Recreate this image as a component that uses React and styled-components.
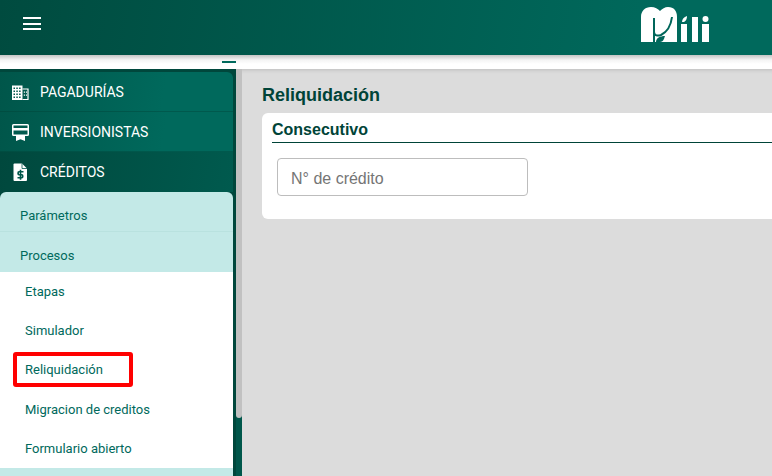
import React from 'react';
import styled, { createGlobalStyle } from 'styled-components';

const GlobalStyle = createGlobalStyle`
  html, body { margin: 0; padding: 0; height: 100%; overflow: hidden; }
  body { font-family: "Liberation Sans", Arial, sans-serif; background: #dcdcdc; }
  #root { height: 100%; }
  * { box-sizing: border-box; }
`;

const Page = styled.div`
  width: 772px;
  height: 476px;
  display: flex;
  flex-direction: column;
  overflow: hidden;
`;

const Header = styled.header`
  height: 55px;
  flex: none;
  display: flex;
  align-items: flex-start;
  justify-content: space-between;
  padding: 17px 62px 0 23px;
  background: linear-gradient(100deg, #004b3f 0%, #00695c 85%);
`;

const MenuButton = styled.button`
  width: 18px;
  height: 13px;
  padding: 0;
  border: 0;
  background: none;
  display: flex;
  flex-direction: column;
  justify-content: space-between;
`;

const MenuLine = styled.span`
  display: block;
  height: 2px;
  background: #fff;
`;

const Logo = styled.svg`
  width: 69px;
  height: 36px;
  margin-top: -10px;
  display: block;
`;

const TabStrip = styled.div`
  height: 14px;
  flex: none;
  background: linear-gradient(#c4c4c4 0, #f4f4f4 5px, #fff 9px);
  padding: 6px 0 0 222px;
`;

const TabMark = styled.div`
  width: 14px;
  height: 2px;
  background: #00695c;
`;

const Body = styled.div`
  flex: 1;
  display: flex;
  min-height: 0;
`;

const Sidebar = styled.aside`
  width: 236px;
  flex: none;
  padding: 3px 3px 0 0;
  background: #00473c;
  overflow: hidden;
`;

const NavRow = styled.div`
  height: 40px;
  display: flex;
  align-items: center;
  gap: 10px;
  padding-left: 11px;
  color: #fff;
  font-family: Roboto, sans-serif;
  font-size: 14px;
  background: ${(p) =>
    p.$active
      ? 'linear-gradient(100deg, #00483d, #005a4e)'
      : 'linear-gradient(100deg, #00564a, #00695c 70%)'};
  border-top-right-radius: ${(p) => (p.$first ? '6px' : '0')};
  box-shadow: ${(p) => (p.$active ? 'none' : 'inset 0 -1px 0 rgba(0, 60, 50, 0.35)')};
`;

const NavIcon = styled.svg`
  width: 19px;
  height: 19px;
  flex: none;
  display: block;
`;

const SubGroup = styled.div`
  background: #c3e9e7;
  border-radius: ${(p) => (p.$top ? '6px 6px 0 0' : '0')};
`;

const SubRow = styled.div`
  height: 40px;
  display: flex;
  align-items: center;
  padding: 6px 0 0 20px;
  color: #00695c;
  font-family: Roboto, sans-serif;
  font-size: 13px;
  box-shadow: ${(p) => (p.$divided ? 'inset 0 -1px 0 #b9e2df' : 'none')};
`;

const LinkList = styled.div`
  background: #fff;
  height: 196px;
`;

const LinkRow = styled.div`
  height: 39.2px;
  display: flex;
  align-items: center;
  padding-left: 25px;
  color: #00695c;
  font-family: Roboto, sans-serif;
  font-size: 13px;
  position: relative;
`;

const Highlight = styled.div`
  position: absolute;
  left: 13px;
  top: 2px;
  width: 120px;
  height: 35px;
  border: 4px solid #ff0000;
  border-radius: 3px;
`;

const Scrollbar = styled.div`
  width: 6px;
  flex: none;
  background: #00574b;
`;

const ScrollThumb = styled.div`
  height: 349px;
  background: #c1c1c1;
  border-radius: 0 0 3px 3px;
`;

const Main = styled.main`
  flex: 1;
  min-width: 0;
  padding: 15px 0 0 20px;
  background: #dcdcdc;
  box-shadow: inset 0 5px 5px -5px rgba(0, 0, 0, 0.2);
`;

const Title = styled.h1`
  margin: 0 0 7px;
  font-size: 18px;
  line-height: 22px;
  font-weight: 700;
  color: #004438;
`;

const Card = styled.section`
  height: 106px;
  background: #fff;
  border-radius: 6px 0 0 6px;
  padding: 6px 0 0 10px;
`;

const CardTitle = styled.h2`
  margin: 0;
  height: 24px;
  font-size: 16px;
  line-height: 21px;
  font-weight: 700;
  color: #004438;
  border-bottom: 1px solid #004438;
`;

const CreditInput = styled.input`
  display: block;
  width: 251px;
  height: 38px;
  margin: 15px 0 0 5px;
  padding: 4px 13px 0;
  border: 1px solid #bdbdbd;
  border-radius: 4px;
  font-family: "Liberation Sans", Arial, sans-serif;
  font-size: 16px;
  background: #fff;
  outline: none;
  &::placeholder { color: #757575; opacity: 1; }
`;

const links = ['Etapas', 'Simulador', 'Reliquidación', 'Migracion de creditos', 'Formulario abierto'];

const BuildingIcon = () => (
  <NavIcon viewBox="0 0 19 19">
    <path d="M1 2.500h10.500v14.500H1z" fill="#fff" />
    <path d="M2.500 4.500h1.500v1.500H2.500zM5.300 4.500h1.500v1.500H5.300zM8.100 4.500h1.500v1.500H8.100zM2.500 7.500h1.500v1.500H2.500zM5.300 7.500h1.500v1.500H5.300zM8.100 7.500h1.500v1.500H8.100zM2.500 10.500h1.500v1.500H2.500zM5.300 10.500h1.500v1.500H5.300zM8.100 10.500h1.500v1.500H8.100zM2.500 13.500h1.500v1.500H2.500zM5.300 13.500h1.500v1.500H5.300zM8.100 13.500h1.500v1.500H8.100z" fill="#00584c" />
    <path d="M11.500 6h5.500v10.500h-5.500" fill="none" stroke="#fff" strokeWidth="1.200" />
    <path d="M12.800 8.500h1.300v1.300h-1.300zM12.800 11.500h1.300v1.300h-1.300zM15 8.500h1v1.300h-1zM15 11.500h1v1.300h-1z" fill="#fff" />
  </NavIcon>
);

const CertificateIcon = () => (
  <NavIcon viewBox="0 0 19 19" fill="#fff">
    <path fillRule="evenodd" d="M2.500 1h14A1.500 1.500 0 0 1 18 2.500v9a1.500 1.500 0 0 1-1.500 1.500H14v5l-4.500-1.800L5 18v-5H2.500A1.500 1.500 0 0 1 1 11.500v-9A1.500 1.500 0 0 1 2.500 1zM2.500 2.500V5h14V2.500zM2.500 7.500v4h14v-4z" />
  </NavIcon>
);

const InvoiceIcon = () => (
  <NavIcon viewBox="0 0 19 19">
    <path d="M3.500 .5H11l5 5v11.500a1 1 0 0 1-1 1H3.500a1 1 0 0 1-1-1V1.500a1 1 0 0 1 1-1z" fill="#fff" />
    <path d="M11 .5v5h5" fill="none" stroke="#00574b" strokeWidth="0.800" />
    <path d="M12.500 8.800H8c-1.300 0-1.300 3 0 3h2.800c1.300 0 1.300 3 0 3H6.500M9.500 6.800v10" fill="none" stroke="#00574b" strokeWidth="1.600" />
  </NavIcon>
);

export default function App() {
  return (
    <Page>
      <GlobalStyle />
      <Header>
        <MenuButton aria-label="Menu">
          <MenuLine />
          <MenuLine />
          <MenuLine />
        </MenuButton>
        <Logo viewBox="0 0 69 36" fill="#fff">
          <path d="M0 35V10C0 4 4 0 10 0c4 0 7 2 9 4 2-2 5-4 8-4 6 0 9 4 9 10v25z" />
          <path d="M13 11v24M31 10c-1 8-5 15-11 18-3 1-7 1-7-3" fill="none" stroke="#00665a" strokeWidth="2" />
          <path d="M15 35c0-4 4-6 9-6-1 3-2 6-5 6z" fill="#00665a" />
          <path d="M40 17h6v18h-6z" />
          <path d="M41 15c0-3 2-5 5-6 0 3-1 5-3 6z" />
          <path d="M51 10h6v25h-6z" />
          <path d="M61 17h7v18h-7z" />
          <circle cx="64.500" cy="12" r="3" />
        </Logo>
      </Header>
      <TabStrip>
        <TabMark />
      </TabStrip>
      <Body>
        <Sidebar>
          <NavRow $first>
            <BuildingIcon />
            PAGADURÍAS
          </NavRow>
          <NavRow>
            <CertificateIcon />
            INVERSIONISTAS
          </NavRow>
          <NavRow $active>
            <InvoiceIcon />
            CRÉDITOS
          </NavRow>
          <SubGroup $top>
            <SubRow $divided>Parámetros</SubRow>
            <SubRow>Procesos</SubRow>
          </SubGroup>
          <LinkList>
            {links.map((label) => (
              <LinkRow key={label}>
                {label}
                {label === 'Reliquidación' && <Highlight />}
              </LinkRow>
            ))}
          </LinkList>
          <SubGroup>
            <SubRow />
          </SubGroup>
        </Sidebar>
        <Scrollbar>
          <ScrollThumb />
        </Scrollbar>
        <Main>
          <Title>Reliquidación</Title>
          <Card>
            <CardTitle>Consecutivo</CardTitle>
            <CreditInput placeholder="N° de crédito" />
          </Card>
        </Main>
      </Body>
    </Page>
  );
}
